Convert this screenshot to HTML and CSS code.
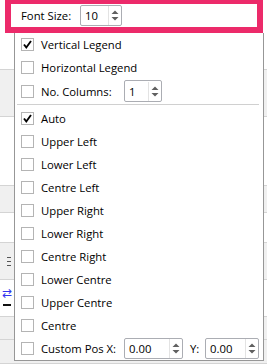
FILE: index.html
```html
<!DOCTYPE html>
<html lang="en">
<head>
    <meta charset="UTF-8">
    <title>Legend Options</title>
    <link rel="stylesheet" href="styles.css">
</head>
<body>
    <!-- application behind the popup -->
    <div class="app">
        <div class="band band-1"></div>
        <div class="band band-2 grey"></div>
        <div class="band band-3"></div>
        <div class="band band-4 grey"></div>
        <div class="band band-5"></div>
        <div class="band band-6 grey">
            <span class="tick"></span><span class="tick"></span><span class="tick"></span>
        </div>
        <div class="band band-7">
            <span class="arrows">&#8644;</span>
            <span class="bar"></span>
        </div>
        <div class="band band-8 grey"></div>
        <div class="band band-9"></div>
    </div>

    <div class="popup">
        <div class="highlight">
            <div class="font-row">
                <span class="label">Font Size:</span>
                <div class="spin spin-font">
                    <span class="spin-val">10</span>
                    <span class="spin-btns">
                        <svg width="8" height="13" viewBox="0 0 8 13"><path d="M0.5 5 L4 1.5 L7.5 5 Z M0.5 8 L4 11.5 L7.5 8 Z" fill="#606060"/></svg>
                    </span>
                </div>
            </div>
        </div>

        <div class="menu">
            <div class="row"><span class="box checked"><svg width="11" height="11" viewBox="0 0 11 11"><path d="M2 5.5 L4.3 8.5 L9 2" fill="none" stroke="#000" stroke-width="1.9"/></svg></span>Vertical Legend</div>
            <div class="row"><span class="box"></span>Horizontal Legend</div>
            <div class="row row-tall">
                <span class="box"></span><span class="field-label">No. Columns:</span>
                <div class="spin spin-cols">
                    <span class="spin-val">1</span>
                    <span class="spin-btns">
                        <svg width="8" height="13" viewBox="0 0 8 13"><path d="M0.5 5 L4 1.5 L7.5 5 Z M0.5 8 L4 11.5 L7.5 8 Z" fill="#606060"/></svg>
                    </span>
                </div>
            </div>
            <div class="sep"></div>
            <div class="row"><span class="box checked"><svg width="11" height="11" viewBox="0 0 11 11"><path d="M2 5.5 L4.3 8.5 L9 2" fill="none" stroke="#000" stroke-width="1.9"/></svg></span>Auto</div>
            <div class="row"><span class="box"></span>Upper Left</div>
            <div class="row"><span class="box"></span>Lower Left</div>
            <div class="row"><span class="box"></span>Centre Left</div>
            <div class="row"><span class="box"></span>Upper Right</div>
            <div class="row"><span class="box"></span>Lower Right</div>
            <div class="row"><span class="box"></span>Centre Right</div>
            <div class="row"><span class="box"></span>Lower Centre</div>
            <div class="row"><span class="box"></span>Upper Centre</div>
            <div class="row"><span class="box"></span>Centre</div>
            <div class="row row-last">
                <span class="box"></span><span class="field-label">Custom Pos X:</span>
                <div class="spin spin-x">
                    <span class="spin-val">0.00</span>
                    <span class="spin-btns">
                        <svg width="8" height="13" viewBox="0 0 8 13"><path d="M0.5 5 L4 1.5 L7.5 5 Z M0.5 8 L4 11.5 L7.5 8 Z" fill="#606060"/></svg>
                    </span>
                </div>
                <span class="y-label">Y:</span>
                <div class="spin spin-y">
                    <span class="spin-val">0.00</span>
                    <span class="spin-btns">
                        <svg width="8" height="13" viewBox="0 0 8 13"><path d="M0.5 5 L4 1.5 L7.5 5 Z M0.5 8 L4 11.5 L7.5 8 Z" fill="#606060"/></svg>
                    </span>
                </div>
            </div>
        </div>
    </div>
</body>
</html>
```

FILE: styles.css
```css
body {
    margin: 0;
    width: 267px;
    height: 364px;
    overflow: hidden;
    position: relative;
    font-family: "Open Sans", "Noto Sans", sans-serif;
    font-size: 11.3px;
    color: #000;
    background: #f0f0f0;
}

/* app behind the menu */
.app {
    display: flex;
    flex-direction: column;
    height: 364px;
}
.band {
    background: #fff;
    border-bottom: 1px solid #d4d4d4;
    position: relative;
}
.band.grey {
    background: #f0f0f0;
}
.band-1 { height: 69px; }
.band-2 { height: 46px; }
.band-3 { height: 68px; }
.band-4 { height: 26px; }
.band-5 { height: 29px; }
.band-6 {
    height: 36px;
    display: flex;
    flex-direction: column;
    align-items: flex-end;
    justify-content: center;
    gap: 3px;
    padding-right: 256px;
}
.tick {
    width: 4px;
    height: 1px;
    background: #555;
}
.band-7 { height: 36px; }
.arrows {
    position: absolute;
    left: 2px;
    top: 4px;
    color: #3333ee;
    font-size: 12px;
}
.bar {
    position: absolute;
    left: 3px;
    top: 24px;
    width: 8px;
    height: 2px;
    background: #111;
}
.band-8 { height: 22px; }
.band-9 { flex: 1; background: #f0f0f0; }

/* popup */
.popup {
    position: absolute;
    left: 5px;
    top: -2px;
    width: 259px;
}
.highlight {
    width: 246px;
    height: 23px;
    border: 6px solid #ec2a6a;
    background: #fff;
    position: relative;
    z-index: 2;
}
.font-row {
    display: flex;
    align-items: center;
    height: 23px;
    padding-left: 10px;
}
.font-row .label {
    width: 59px;
}
.menu {
    margin-left: 9px;
    width: 248px;
    background: #fff;
    border: 1px solid #979797;
    border-top: none;
    height: 327px;
}
.row {
    display: flex;
    align-items: center;
    height: 23px;
    padding-left: 6px;
}
.row-tall {
    height: 24px;
}
.box {
    width: 11px;
    height: 11px;
    border: 1px solid #b4b4b4;
    background: #fff;
    margin-right: 7px;
    display: flex;
    align-items: center;
    justify-content: center;
    flex-shrink: 0;
}
.field-label {
    width: 83px;
}
.sep {
    height: 1px;
    background: #d0d0d0;
    margin: 1px 4px 2px 2px;
}

/* spin boxes */
.spin {
    display: flex;
    align-items: center;
    height: 19px;
    border: 1px solid #abadb3;
    border-radius: 2px;
    background: #fff;
}
.spin-val {
    flex: 1;
    padding-left: 4px;
}
.spin-btns {
    width: 12px;
    height: 19px;
    border-left: 1px solid #e3e3e3;
    display: flex;
    align-items: center;
    justify-content: center;
}
.spin-font { width: 40px; }
.spin-cols { width: 36px; height: 20px; }
.spin-x { width: 57px; }
.y-label {
    margin-left: 7px;
    width: 15px;
}
.spin-y { width: 52px; }
```
